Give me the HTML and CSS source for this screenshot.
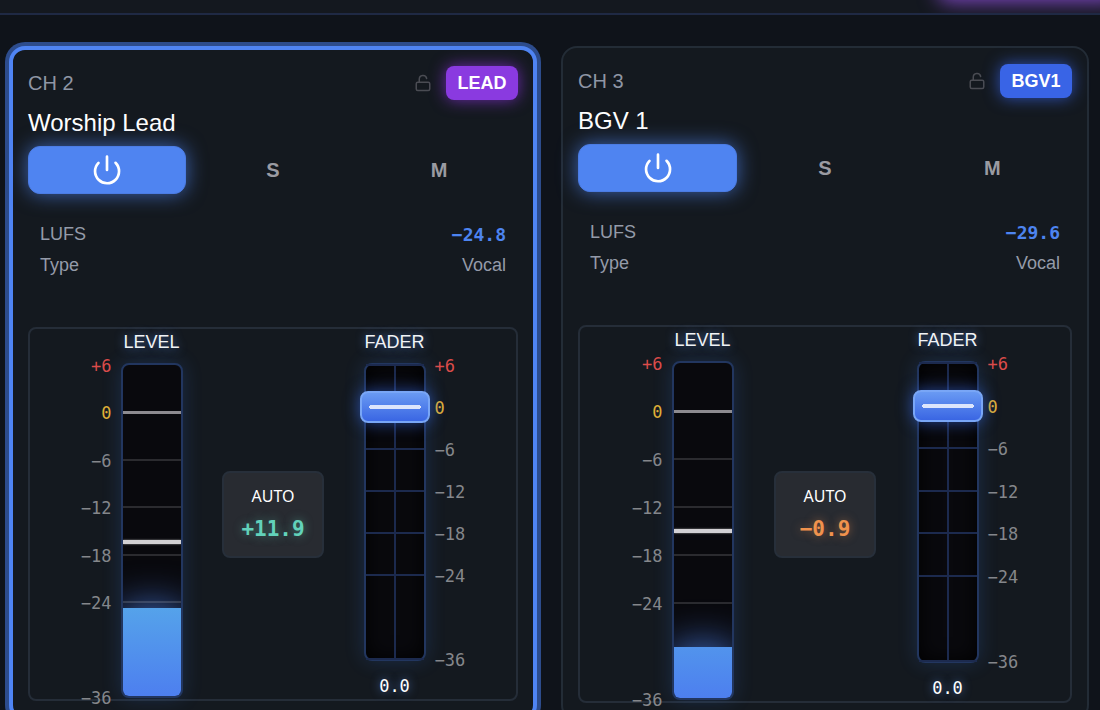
FILE: index.html
```html
<!DOCTYPE html>
<html lang="en">
<head>
    <meta charset="UTF-8">
    <meta name="viewport" content="width=device-width, initial-scale=1.0">
    <title>Mixer Channels</title>
    <link rel="stylesheet" href="styles.css">
</head>
<body>
    <header class="topbar"><div class="topbar-glow"></div></header>
    <main class="channels">
        <section class="channel selected">
            <div class="channel-head">
                <span class="channel-num">CH 2</span>
                <button type="button" class="lock-btn" aria-label="Lock channel 2">
                    <svg width="18" height="18" viewBox="0 0 24 24"><rect x="3" y="11" width="18" height="11" rx="2"/><path d="M7 11V7a5 5 0 0 1 9.9-1"/></svg>
                </button>
                <span class="badge lead">LEAD</span>
            </div>
            <h2 class="channel-name">Worship Lead</h2>
            <div class="switches">
                <button type="button" class="switch on" aria-label="Power">
                    <svg width="32" height="32" viewBox="0 0 24 24"><path d="M12 2v10"/><path d="M18.4 6.6a9 9 0 1 1-12.77.04"/></svg>
                </button>
                <button type="button" class="switch">S</button>
                <button type="button" class="switch">M</button>
            </div>
            <dl class="info">
                <div class="info-row"><dt>LUFS</dt><dd class="lufs">−24.8</dd></div>
                <div class="info-row"><dt>Type</dt><dd>Vocal</dd></div>
            </dl>
            <div class="panel">
                <div class="strip level">
                    <div class="strip-title">LEVEL</div>
                    <ul class="scale left">
                        <li class="red">+6</li><li class="yellow">0</li><li>−6</li><li>−12</li><li>−18</li><li>−24</li><li></li><li>−36</li>
                    </ul>
                    <div class="meter">
                        <div class="fill" style="height: 26.7%"></div>
                        <div class="ticks"><i></i><i class="zero"></i><i></i><i></i><i></i><i></i><i></i><i></i></div>
                        <div class="peak" style="bottom: 46%"></div>
                    </div>
                </div>
                <div class="auto">
                    <span class="auto-title">AUTO</span>
                    <span class="auto-value up">+11.9</span>
                </div>
                <div class="strip fader">
                    <label class="strip-title" for="fader2">FADER</label>
                    <div class="track">
                        <div class="ticks"><i></i><i></i><i></i><i></i><i></i><i></i><i></i><i></i></div>
                        <input type="range" id="fader2" min="-36" max="6" step="0.1" value="0">
                    </div>
                    <ul class="scale right">
                        <li class="red">+6</li><li class="yellow">0</li><li>−6</li><li>−12</li><li>−18</li><li>−24</li><li></li><li>−36</li>
                    </ul>
                    <output class="fader-value" for="fader2">0.0</output>
                </div>
            </div>
        </section>
        <section class="channel">
            <div class="channel-head">
                <span class="channel-num">CH 3</span>
                <button type="button" class="lock-btn" aria-label="Lock channel 3">
                    <svg width="18" height="18" viewBox="0 0 24 24"><rect x="3" y="11" width="18" height="11" rx="2"/><path d="M7 11V7a5 5 0 0 1 9.9-1"/></svg>
                </button>
                <span class="badge bgv">BGV1</span>
            </div>
            <h2 class="channel-name">BGV 1</h2>
            <div class="switches">
                <button type="button" class="switch on" aria-label="Power">
                    <svg width="32" height="32" viewBox="0 0 24 24"><path d="M12 2v10"/><path d="M18.4 6.6a9 9 0 1 1-12.77.04"/></svg>
                </button>
                <button type="button" class="switch">S</button>
                <button type="button" class="switch">M</button>
            </div>
            <dl class="info">
                <div class="info-row"><dt>LUFS</dt><dd class="lufs">−29.6</dd></div>
                <div class="info-row"><dt>Type</dt><dd>Vocal</dd></div>
            </dl>
            <div class="panel">
                <div class="strip level">
                    <div class="strip-title">LEVEL</div>
                    <ul class="scale left">
                        <li class="red">+6</li><li class="yellow">0</li><li>−6</li><li>−12</li><li>−18</li><li>−24</li><li></li><li>−36</li>
                    </ul>
                    <div class="meter">
                        <div class="fill" style="height: 15.2%"></div>
                        <div class="ticks"><i></i><i class="zero"></i><i></i><i></i><i></i><i></i><i></i><i></i></div>
                        <div class="peak" style="bottom: 49.4%"></div>
                    </div>
                </div>
                <div class="auto">
                    <span class="auto-title">AUTO</span>
                    <span class="auto-value down">−0.9</span>
                </div>
                <div class="strip fader">
                    <label class="strip-title" for="fader3">FADER</label>
                    <div class="track">
                        <div class="ticks"><i></i><i></i><i></i><i></i><i></i><i></i><i></i><i></i></div>
                        <input type="range" id="fader3" min="-36" max="6" step="0.1" value="0">
                    </div>
                    <ul class="scale right">
                        <li class="red">+6</li><li class="yellow">0</li><li>−6</li><li>−12</li><li>−18</li><li>−24</li><li></li><li>−36</li>
                    </ul>
                    <output class="fader-value" for="fader3">0.0</output>
                </div>
            </div>
        </section>
    </main>
    <script>
        document.querySelectorAll('.track input').forEach((input) => {
            input.addEventListener('input', () => {
                const out = document.querySelector('output[for="' + input.id + '"]');
                out.textContent = Number(input.value).toFixed(1).replace('-', '−');
            });
        });
    </script>
</body>
</html>
```
FILE: styles.css
```css
* { box-sizing: border-box; }
body {
    margin: 0;
    height: 100vh;
    overflow: hidden;
    background: #0f131a;
    color: #fff;
    font-family: "Liberation Sans", Arial, sans-serif;
    font-size: 18px;
}
ul, dl, dd, h2 { margin: 0; padding: 0; }
ul { list-style: none; }
button { font-family: inherit; cursor: pointer; }
svg { fill: none; stroke: currentColor; stroke-width: 2; stroke-linecap: round; stroke-linejoin: round; }

.topbar {
    position: relative;
    height: 15px;
    overflow: hidden;
    background: #14181f;
    border-bottom: 2px solid #1f2944;
}
.topbar-glow {
    position: absolute;
    top: -40px;
    right: -20px;
    width: 182px;
    height: 40px;
    border-radius: 10px;
    box-shadow: 0 2px 20px rgba(147, 80, 225, 0.85);
}

.channels {
    display: grid;
    grid-template-columns: 1fr 1fr;
    gap: 24px;
    padding: 31px 11px 32px 9px;
}
.channel {
    display: flex;
    flex-direction: column;
    min-height: 675px;
    padding: 16px 15px;
    background: #14191f;
    border: 2px solid #232c36;
    border-radius: 16px;
}
.channel.selected {
    border: 4px solid #4f84f3;
    box-shadow: 0 0 0 4px #2d4c8c;
}

.channel-head { display: flex; align-items: center; gap: 8px; height: 34px; }
.channel-num { flex: 1; font-size: 20px; color: #8f96a5; }
.lock-btn {
    display: flex;
    padding: 6px;
    border: 0;
    background: none;
    color: #4a4c53;
}
.badge {
    width: 72px;
    border-radius: 8px;
    line-height: 34px;
    font-weight: bold;
    text-align: center;
}
.lead { background: #8a3ae0; box-shadow: 0 0 16px rgba(147, 51, 234, 0.7); }
.bgv { background: #3964e6; box-shadow: 0 0 16px rgba(59, 105, 246, 0.7); }

.channel-name { margin: 8px 0; line-height: 30px; font-size: 24px; font-weight: normal; }

.switches { display: grid; grid-template-columns: repeat(3, 1fr); gap: 8px; }
.switch {
    display: flex;
    align-items: center;
    justify-content: center;
    height: 48px;
    padding: 0;
    border: 0;
    border-radius: 12px;
    background: none;
    color: #9a9ba2;
    font-size: 20px;
    font-weight: bold;
}
.switch.on {
    border: 1px solid #4b7ce4;
    background: #4f84f1;
    color: #fff;
    box-shadow: 0 0 20px rgba(79, 132, 241, 0.7);
}

.info { margin: 17px 0 38px; padding: 12px; color: #949ba9; }
.info-row { display: flex; justify-content: space-between; line-height: 23px; }
.info-row + .info-row { margin-top: 8px; }
.lufs { color: #4d84f0; font-family: "DejaVu Sans Mono", monospace; font-weight: bold; }

.panel {
    flex: 1;
    display: grid;
    grid-template-columns: 1fr 1fr;
    padding: 2px 0 1px;
    border: 2px solid #252d38;
    border-radius: 8px;
}
.strip {
    display: grid;
    grid-template-columns: 1fr 62px 1fr;
    grid-template-rows: 32px 1fr;
    column-gap: 9px;
    grid-row: 1;
}
.level { grid-column: 1; }
.fader { grid-column: 2; grid-template-rows: 32px 1fr 37px; }
.strip-title {
    grid-column: 1 / 4;
    line-height: 22px;
    text-align: center;
    color: #f1f3f6;
    text-shadow: 0 0 10px rgba(96, 150, 246, 0.7);
}
.fader-value {
    grid-column: 1 / 4;
    padding-top: 14px;
    line-height: 23px;
    text-align: center;
    font-family: "DejaVu Sans Mono", monospace;
    font-size: 17px;
    text-shadow: 0 0 10px rgba(96, 150, 246, 0.7);
}

/* eight marks 6 dB apart, the one at -30 is left out */
.scale, .ticks { display: flex; flex-direction: column; justify-content: space-between; }
.scale {
    padding: 3px 0 1px;
    color: #85878b;
    font-family: "DejaVu Sans Mono", monospace;
    font-size: 17px;
    line-height: 0;
}
.scale li { height: 0; }
.scale.left { padding-bottom: 0; text-align: right; }
.scale .red { color: #dc4c4a; }
.scale .yellow { color: #e0b136; }

.meter, .track {
    position: relative;
    grid-column: 2;
    border: 2px solid #22365f;
    border-radius: 8px;
    background: #09090d;
    box-shadow: 0 0 20px rgba(59, 130, 246, 0.2);
}
.track { box-shadow: 0 0 20px rgba(59, 130, 246, 0.2), inset 0 0 20px #000; }
.meter { overflow: hidden; }
.scale.right { grid-column: 3; }
.ticks { position: absolute; inset: 0; }
.ticks i { height: 2px; margin: -1px 0; background: #1c2a4e; }
.ticks i:nth-child(7) { visibility: hidden; }
.meter .ticks i { background: rgba(255, 255, 255, 0.14); }
.meter .ticks .zero { height: 3px; background: #8d8b90; }
.meter .ticks i:first-child, .meter .ticks i:last-child { visibility: hidden; }
.fill {
    position: absolute;
    bottom: 0;
    width: 100%;
    background: linear-gradient(to top, #4d7fef, #55a3ea 90px);
    box-shadow: 0 0 40px rgba(79, 132, 241, 0.9);
}
.peak {
    position: absolute;
    width: 100%;
    height: 4px;
    background: #d2d0d3;
    box-shadow: 0 0 2px #aaa;
}
.track::before {
    content: "";
    position: absolute;
    inset: 0 28px;
    background: #1c2a4e;
}

.track input {
    position: absolute;
    inset: -16px -6px;
    width: 70px;
    height: calc(100% + 32px);
    margin: 0;
    appearance: none;
    background: none;
    writing-mode: vertical-lr;
    direction: rtl;
}
.track input::-webkit-slider-thumb {
    appearance: none;
    width: 70px;
    height: 32px;
    border: 2px solid #79a6f6;
    border-radius: 8px;
    background:
        radial-gradient(circle, #dce5fc 2px, transparent 2px) 7px 12px / 4px 4px no-repeat,
        radial-gradient(circle, #dce5fc 2px, transparent 2px) 55px 12px / 4px 4px no-repeat,
        linear-gradient(#dce5fc, #dce5fc) center / 48px 4px no-repeat,
        linear-gradient(#699af3, #3a66e3);
    box-shadow: 0 0 16px rgba(59, 110, 240, 0.6);
}

.auto {
    grid-area: 1 / 1 / 2 / 3;
    place-self: center;
    display: flex;
    flex-direction: column;
    align-items: center;
    width: 102px;
    padding: 11px 0 12px;
    border: 2px solid #272f3a;
    border-radius: 8px;
    background: #282b31;
}
.auto-title { font-family: "Noto Sans", sans-serif; font-size: 16px; line-height: 24px; }
.auto-value {
    margin-top: 7px;
    font-family: "DejaVu Sans Mono", monospace;
    font-size: 21px;
    line-height: 29px;
    font-weight: bold;
}
.up { color: #62d2ba; text-shadow: 0 0 10px rgba(98, 210, 186, 0.5); }
.down { color: #f0924d; text-shadow: 0 0 10px rgba(240, 146, 77, 0.5); }
```
